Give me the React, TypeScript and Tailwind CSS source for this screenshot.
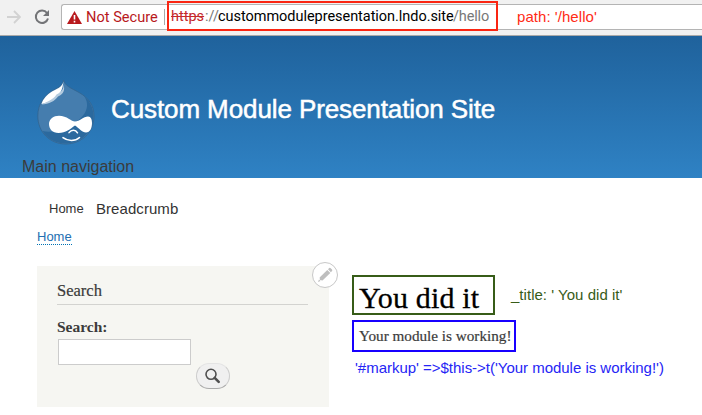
import React from "react";

const sans = "font-['Liberation_Sans',Arial,sans-serif]";
const serif = "font-['Liberation_Serif',Georgia,serif]";

function DrupalLogo() {
  return (
    <svg className="mt-[43px] h-[66px] w-[58px] shrink-0" viewBox="0 0 58 66">
      <path d="M26.5 1C28 7 34 9 42 13.5C52 19 57 27 57 37C57 54 44 65 28.5 65C13 65 .8 53 .8 37C.8 25 7 17 15 12C21 8.500 26 7 26.500 1Z" fill="#457dae" stroke="#33658f" strokeWidth="0.8" />
      <path d="M47 17C53 22 56.500 29 56.500 37C56.500 53 44 64.500 28.500 64.500C18 64.500 10 59.500 5.500 52C17 55 29 49 39 43C48 37 54 27 47 17Z" fill="#2b699e" />
      <path d="M26.500 .5C26.500 7 22 9 15 12.500C10 15.500 6 20 4.500 25C9 24 14 22.500 18 19C22 15 26 13 26.500 .5Z" fill="#fff" />
      <path d="M26.500 5C27 10 25 12.500 19.500 15.500C16 21 10 22.500 4.500 25.500C12 25 18 22 21 17.500C27 15 28 11 26.500 5Z" fill="#b4cbdf" />
      <path d="M38 46.500C33 50 29 54 21.500 54C15.500 54 12 50 12 45C12 40 16.500 36.700 22 36.700C30 36.700 34.500 42.500 38 42.500C42.500 42.500 46.500 37.500 51 37.500C54 37.500 55 40.500 55 44C55 49 53 53.500 49 53.500C45 53.500 42 49 38 46.500Z" fill="#fff" />
      <path d="M32 53.600C34.500 50.300 38.500 50.300 40.500 53.800" fill="none" stroke="#fff" strokeWidth="1.5" strokeLinecap="round" />
      <path d="M26 58.700C31 62.500 38 62.500 42.500 58.500" fill="none" stroke="#fff" strokeWidth="1.600" strokeLinecap="round" />
    </svg>
  );
}

function BrowserBar() {
  return (
    <div className="relative flex h-9 items-start border-b border-[#a9a9a9] bg-[#f1f1f1] font-[Roboto,sans-serif] text-[14.500px] leading-[26px]">
      <svg className="ml-[7px] mt-[10px] h-[14px] w-[14px] shrink-0" viewBox="0 0 14 14" fill="none" stroke="#d2d2d2" strokeWidth="1.800">
        <path d="M0 7H13M7 1L13 7L7 13" />
      </svg>
      <svg className="ml-[13px] mt-[9px] h-4 w-4 shrink-0" viewBox="0 0 16 16">
        <path d="M13 4A6.200 6.200 0 1 0 14 9.500" fill="none" stroke="#737477" strokeWidth="2" />
        <path d="M15 1V7H9Z" fill="#737477" />
      </svg>
      <div className="ml-[11px] mt-1 flex h-[26px] flex-1 items-center rounded-l-[3px] border border-r-0 border-[#b4b4b4] bg-white whitespace-nowrap">
        <svg className="ml-[5px] h-[13px] w-[15px] shrink-0" viewBox="0 0 15 13">
          <path d="M7.500 0L15 13H0Z" fill="#b8191d" />
          <path d="M7.500 4V8.500M7.500 9.800V11.400" stroke="#fff" strokeWidth="1.600" />
        </svg>
        <span className="ml-[4px] w-[74px] shrink-0 text-[14.600px] text-[#b8191d]">Not Secure</span>
        <span className="ml-[4px] h-4 w-px shrink-0 bg-[#aaa]" />
        <span className="ml-[6px] w-[34px] shrink-0 text-[#c5292c] line-through">https</span>
        <span className="w-[13px] shrink-0 text-[#777]">://</span>
        <span className="w-[235px] shrink-0 tracking-[-0.040px] text-black">custommodulepresentation.lndo.site</span>
        <span className="w-[36px] shrink-0 tracking-[-0.150px] text-[#777]">/hello</span>
        <span className={`${sans} ml-[28px] text-[15px] tracking-[0.050px] text-[#ff2b16]`}>path: '/hello'</span>
      </div>
      <div className="absolute left-[167px] top-[1px] h-[30px] w-[331px] border-2 border-[#fa2512]" />
    </div>
  );
}

function SearchBlock() {
  return (
    <section className={`${serif} relative ml-[37px] h-[141px] w-[292px] shrink-0 bg-[#f6f6f2] pl-[21px] pr-[21px] pt-[14px] text-[#3b3b3b]`}>
      <h2 className="-ml-px h-[25px] border-b border-[#d3d3d0] text-[16.500px] leading-[22px] [-webkit-text-stroke:0.200px_#3b3b3b]">Search</h2>
      <label className="-ml-px mt-[13px] block text-[15.500px] font-bold leading-[18px]">Search:</label>
      <div className="mt-[3px] flex items-start">
        <input aria-label="Search" className="h-[26px] w-[133px] shrink-0 border border-[#ccc] bg-white" />
        <button aria-label="Submit search" className="ml-[5px] mt-[24px] flex h-[26px] w-[34px] shrink-0 items-center justify-center rounded-full border border-[#ccc] border-b-[#aaa] border-t-[#e4e4e4] bg-[#f0f0f0]">
          <svg className="-mt-px h-4 w-4" viewBox="0 0 16 16" fill="none" stroke="#505050">
            <circle cx="6" cy="6.300" r="5" strokeWidth="1.600" />
            <path d="M9.700 9.900L13.700 13.900" strokeWidth="2.600" strokeLinecap="round" />
          </svg>
        </button>
      </div>
      <div className="absolute left-[275px] top-[-4px] flex h-[26px] w-[26px] items-center justify-center rounded-full border border-[#c8c8c8] bg-white">
        <svg className="h-4 w-4" viewBox="0 0 16 16" fill="#bebebe">
          <path d="M1 15L2 12.500L3.500 14Z" />
          <path d="M2.600 10.500L10.300 3L13.300 6L5.500 13.400L3 13Z" />
          <path d="M11 2.300L12.200 1.100Q13 .5 13.700 1.200L15 2.500Q15.700 3.200 15 4L13.900 5.200Z" />
        </svg>
      </div>
    </section>
  );
}

export default function App() {
  return (
    <div className={`${sans} h-[415px] w-[702px] overflow-hidden bg-white whitespace-nowrap text-[#3b3b3b]`}>
      <BrowserBar />
      <header className="flex h-[142px] flex-col bg-linear-to-b from-[#1f629c] to-[#2f82c4]">
        <div className="flex h-[121px] pl-[37px]">
          <DrupalLogo />
          <h1 className="ml-4 mt-[57px] text-[26px] leading-[32px] tracking-[-0.100px] text-white [-webkit-text-stroke:0.500px_white]">Custom Module Presentation Site</h1>
        </div>
        <div className="pl-[22px] text-[16px] leading-[19px]">Main navigation</div>
      </header>
      <div className="flex h-[51px] items-start pl-[49px] pt-[20px] text-[#333]">
        <span className="w-[47px] text-[13px] leading-[22px]">Home</span>
        <span className="text-[15px] leading-[22px] tracking-[0.060px]">Breadcrumb</span>
      </div>
      <div className="flex h-[37px] items-start pl-[37px]">
        <a className="border-b border-dotted border-[#0071b3] text-[13px] leading-[15px] text-[#236fb2]">Home</a>
      </div>
      <main className="flex items-start">
        <SearchBlock />
        <div className="ml-[23px] mt-[9px]">
          <div className="flex items-center">
            <h2 className={`${serif} h-10 w-[143px] border-2 border-[#375c18] pl-[5px] text-[30px] leading-[41px] tracking-[0.150px] text-black [-webkit-text-stroke:0.300px_black]`}>You did it</h2>
            <span className="ml-4 text-[15px] tracking-[0.030px] text-[#375c18]">_title: ' You did it'</span>
          </div>
          <p className={`${serif} mt-[5px] h-8 w-[164px] border-2 border-[#1800ff] pl-[5px] text-[15.200px] leading-[28px] [-webkit-text-stroke:0.200px_#3b3b3b]`}>Your module is working!</p>
          <p className="ml-[3px] mt-[6px] text-[15px] leading-[20px] tracking-[-0.020px] text-[#2525f5]">'#markup' =&gt;$this-&gt;t('Your module is working!')</p>
        </div>
      </main>
    </div>
  );
}
